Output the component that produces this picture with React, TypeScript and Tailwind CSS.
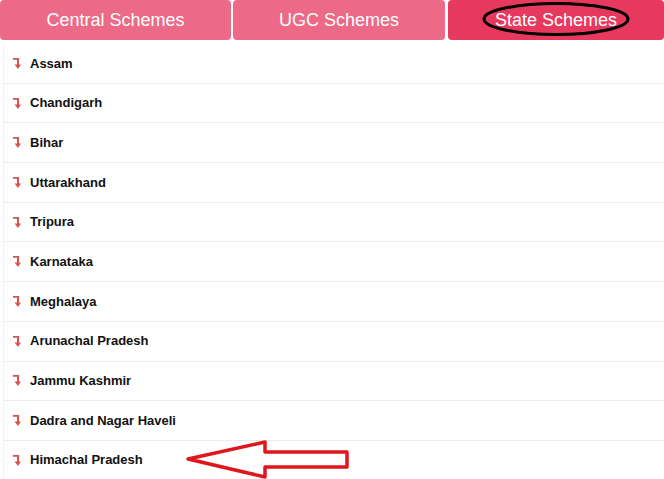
import React from 'react';

const TABS = [
  { label: 'Central Schemes', cls: 'w-[231px] bg-[#ec6a87]' },
  { label: 'UGC Schemes', cls: 'ml-[2px] w-[212px] bg-[#ec6a87]' },
  { label: 'State Schemes', cls: 'ml-[3px] flex-1 bg-[#e7385e]' },
];

const STATES = [
  'Assam',
  'Chandigarh',
  'Bihar',
  'Uttarakhand',
  'Tripura',
  'Karnataka',
  'Meghalaya',
  'Arunachal Pradesh',
  'Jammu Kashmir',
  'Dadra and Nagar Haveli',
  'Himachal Pradesh',
];

function LevelDown() {
  return (
    <svg width="8" height="11" viewBox="0 0 8 11" className="shrink-0">
      <path d="M0 0.8 H5 V7" fill="none" stroke="#d9534f" strokeWidth="2" />
      <path d="M1.5 6.5 L5 11 L8 6.5 Z" fill="#d9534f" />
    </svg>
  );
}

export default function App() {
  return (
    <div
      className="relative h-[479px] w-[664px] overflow-hidden bg-white"
      style={{ fontFamily: '"Liberation Sans", Arial, sans-serif' }}
    >
      <div className="flex h-[40px]">
        {TABS.map((t) => (
          <div
            key={t.label}
            className={`flex items-center justify-center rounded-[4px] text-[18px] text-white ${t.cls}`}
          >
            {t.label}
          </div>
        ))}
      </div>

      <ul className="mt-[4px] ml-[3px] border-l border-[#fbeef1]">
        {STATES.map((s) => (
          <li
            key={s}
            className="flex h-[39.7px] items-center gap-[9px] border-b border-[#ececec] pl-[9px] text-[13px] font-bold text-[#111]"
          >
            <LevelDown />
            {s}
          </li>
        ))}
      </ul>

      {/* annotation: ellipse around active tab */}
      <svg className="absolute left-[481px] top-0" width="152" height="40" viewBox="0 0 152 40">
        <ellipse cx="75" cy="19" rx="72" ry="15.5" fill="none" stroke="#000" strokeWidth="3" />
      </svg>

      {/* annotation: red arrow */}
      <svg className="absolute left-[185px] top-[438px]" width="166" height="41" viewBox="0 0 166 41">
        <polygon
          points="3,21 80,4 80,14 162,14 162,29 80,29 80,39"
          fill="none"
          stroke="#e0161d"
          strokeWidth="3.5"
          strokeLinejoin="round"
        />
      </svg>
    </div>
  );
}
